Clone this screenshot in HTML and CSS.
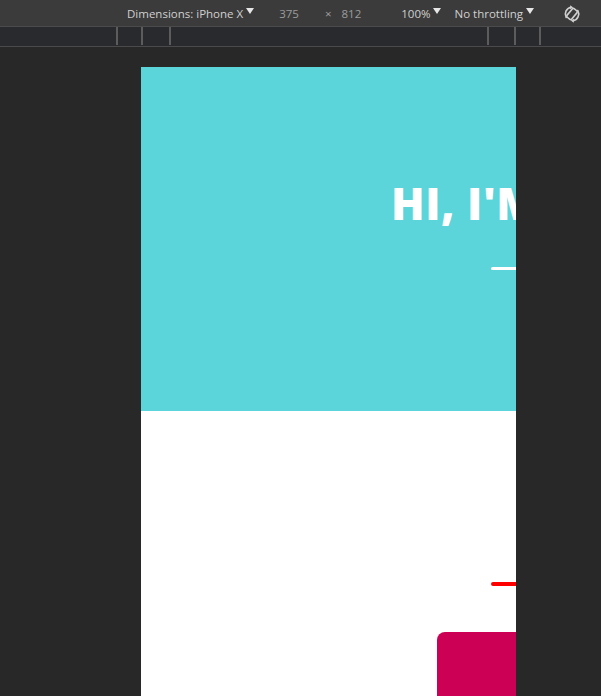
FILE: index.html
```html
<!DOCTYPE html>
<html>
<head>
<meta charset="utf-8">
<link rel="stylesheet" href="styles.css">
</head>
<body>
<div class="toolbar">
  <span class="dim">Dimensions: iPhone X</span><span class="caret"></span>
  <span class="num w">375</span>
  <span class="times">×</span>
  <span class="num h">812</span>
  <span class="zoom">100%</span><span class="caret"></span>
  <span class="throttle">No throttling</span><span class="caret"></span>
  <svg class="rotate" width="20" height="20" viewBox="0 0 20 20">
    <g fill="none" stroke="#cfcfcf" stroke-width="1.6" stroke-linecap="round">
      <rect x="7" y="4.5" width="6" height="11" rx="1.5" transform="rotate(40 10 10)"/>
      <path d="M4.2 13.5 A7 7 0 0 1 9 3.2"/>
      <path d="M15.8 6.5 A7 7 0 0 1 11 16.8"/>
    </g>
    <path d="M8.2 1.2 L11.2 3.4 L8 5.3 Z" fill="#cfcfcf"/>
    <path d="M11.8 18.8 L8.8 16.6 L12 14.7 Z" fill="#cfcfcf"/>
  </svg>
</div>
<div class="ruler">
  <div class="ticks left"><i></i><i></i><i></i></div>
  <div class="ticks right"><i></i><i></i><i></i></div>
</div>
<div class="stage">
  <div class="device">
    <section class="hero">
      <h1 class="title">HI, I'M</h1>
      <div class="bar white"></div>
    </section>
    <section class="about">
      <div class="bar red"></div>
      <div class="card"></div>
    </section>
  </div>
</div>
</body>
</html>
```

FILE: styles.css
```css
html, body {
  margin: 0;
  padding: 0;
  height: 696px;
  overflow: hidden;
  background: #282828;
  font-family: "Open Sans", "DejaVu Sans", sans-serif;
}
.toolbar {
  height: 26px;
  background: #3b3b3b;
  border-bottom: 1px solid #4b4b4b;
  display: flex;
  align-items: center;
  font-size: 11.5px;
  color: #d0d0d0;
  padding-left: 127px;
  box-sizing: content-box;
}
.caret {
  width: 0;
  height: 0;
  border-left: 4px solid transparent;
  border-right: 4px solid transparent;
  border-top: 6px solid #e6e6e6;
  margin-left: 3px;
  margin-bottom: 4px;
}
.num { color: #9c9c9c; }
.num.w { margin-left: 25px; }
.times { color: #9c9c9c; margin-left: 26px; }
.num.h { margin-left: 10px; }
.zoom { margin-left: 40px; }
.throttle { margin-left: 13px; }
.rotate { margin-left: 28px; margin-top: 1px; }
.ruler {
  height: 19px;
  background: #292a2d;
  border-bottom: 1px solid #4a4a4a;
  display: flex;
  align-items: flex-start;
}
.ticks { display: flex; }
.ticks i {
  display: block;
  width: 2px;
  height: 18px;
  background: #5c5c5c;
}
.ticks.left { margin-left: 116px; }
.ticks.left i:nth-child(2) { margin-left: 23px; }
.ticks.left i:nth-child(3) { margin-left: 26px; }
.ticks.right { margin-left: 316px; }
.ticks.right i:nth-child(2) { margin-left: 25px; }
.ticks.right i:nth-child(3) { margin-left: 23px; }
.stage {
  padding: 20px 0 0 141px;
}
.device {
  width: 375px;
  height: 629px;
  overflow: hidden;
  background: #fff;
}
.hero {
  height: 344px;
  background: #5bd5d9;
  padding: 106px 0 0 250px;
  box-sizing: border-box;
}
.title {
  margin: 0;
  white-space: nowrap;
  color: #fff;
  font-family: "Open Sans", sans-serif;
  font-weight: 800;
  font-size: 44px;
  line-height: 60px;
  letter-spacing: 0.5px;
}
.bar {
  height: 4px;
  width: 60px;
  border-radius: 2px;
}
.bar.white {
  background: #fff;
  margin: 34px 0 0 100px;
  height: 3px;
}
.about {
  padding: 171px 0 0 350px;
}
.bar.red {
  background: #ff0000;
}
.card {
  margin: 46px 0 0 -54px;
  width: 200px;
  height: 200px;
  background: #cc0055;
  border-radius: 8px;
}
```
